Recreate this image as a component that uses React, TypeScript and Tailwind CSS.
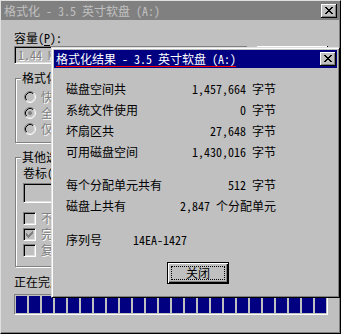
import React from 'react';

// Win98 style "format" window with the result dialog on top

const X_GLYPH = ['XX....XX', '.XX..XX.', '..XXXX..', '...XX...', '..XXXX..', '.XX..XX.', 'XX....XX'];
const CHECK_GLYPH = ['......X', '.....XX', 'X...XXX', 'XX.XXX.', 'XXXXX..', '.XXX...', '..X....'];

function Bitmap({ rows, color }: { rows: string[]; color: string }) {
  const w = rows[0].length;
  return (
    <svg width={w} height={rows.length} viewBox={`0 0 ${w} ${rows.length}`} shapeRendering="crispEdges" className="block">
      {rows.flatMap((r, y) =>
        r.split('').map((c, x) =>
          c === 'X' ? <rect key={`${x}-${y}`} x={x} y={y} width={1} height={1} fill={color} /> : null
        )
      )}
    </svg>
  );
}

function CloseBox() {
  return (
    <div className="flex h-[14px] w-[16px] shrink-0 items-start bg-[#c0c0c0] pl-[4px] pt-[3px] shadow-[inset_-1px_-1px_0_#000,inset_1px_1px_0_#fff,inset_-2px_-2px_0_#808080]">
      <Bitmap rows={X_GLYPH} color="#000" />
    </div>
  );
}

function Radio({ checked }: { checked?: boolean }) {
  return (
    <svg width="12" height="12" viewBox="0 0 12 12" className="block shrink-0">
      <circle cx="6" cy="6" r="5" fill="#c0c0c0" />
      <path d="M2.11 9.89 A5.5 5.5 0 0 1 9.89 2.11" fill="none" stroke="#808080" />
      <path d="M9.89 2.11 A5.5 5.5 0 0 1 2.11 9.89" fill="none" stroke="#fff" />
      <path d="M2.82 9.18 A4.5 4.5 0 0 1 9.18 2.82" fill="none" stroke="#000" />
      <path d="M9.18 2.82 A4.5 4.5 0 0 1 2.82 9.18" fill="none" stroke="#dfdfdf" />
      {checked && <circle cx="6" cy="6" r="2" fill="#808080" />}
    </svg>
  );
}

function Checkbox({ checked }: { checked?: boolean }) {
  return (
    <div className="flex h-[13px] w-[13px] shrink-0 items-start border border-t-[#808080] border-l-[#808080] border-r-white border-b-white bg-[#c0c0c0] pl-[2px] pt-[2px] shadow-[inset_1px_1px_0_#000,inset_-1px_-1px_0_#dfdfdf]">
      {checked && <Bitmap rows={CHECK_GLYPH} color="#808080" />}
    </div>
  );
}

function Group({ title, className, children }: { title: string; className: string; children: React.ReactNode }) {
  return (
    <div className={`relative ml-[1px] w-[312px] border border-[#808080] shadow-[inset_1px_1px_0_#fff,1px_1px_0_#fff] ${className}`}>
      <span className="absolute -top-[8px] left-[5px] bg-[#c0c0c0] px-[1px] whitespace-nowrap">{title}</span>
      {children}
    </div>
  );
}

const sunken =
  'border border-t-[#808080] border-l-[#808080] border-r-white border-b-white shadow-[inset_1px_1px_0_#000,inset_-1px_-1px_0_#dfdfdf]';
const disabledText = 'text-[#808080] [text-shadow:1px_1px_0_#fff] whitespace-nowrap';

const sizes = [
  ['磁盘空间共', '1,457,664 字节'],
  ['系统文件使用', '0 字节'],
  ['坏扇区共', '27,648 字节'],
  ['可用磁盘空间', '1,430,016 字节'],
];

const units = [
  ['每个分配单元共有', '512 字节'],
  ['磁盘上共有', '2,847 个分配单元'],
];

function Row({ label, value }: { label: string; value: string }) {
  return (
    <div className="flex h-[21px] items-center">
      <span className="w-[67px] shrink-0 whitespace-nowrap">{label}</span>
      <span className="w-[143px] shrink-0 whitespace-nowrap text-right">{value}</span>
    </div>
  );
}

export default function App() {
  return (
    <div className="relative h-[334px] w-[341px] overflow-hidden border border-t-[#dfdfdf] border-l-[#dfdfdf] border-r-black border-b-black bg-[#c0c0c0] font-['Noto_Sans_CJK_SC',sans-serif] text-[12px] leading-[14px] text-black shadow-[inset_-1px_-1px_0_#808080] [font-feature-settings:'hwid']">
      {/* Window title */}
      <div className="mr-[1px] flex h-[19px] items-center justify-between bg-[#808080] pl-[3px] pr-[2px] text-[#c0c0c0]">
        <span className="whitespace-nowrap">格式化 - 3.5 英寸软盘 (A:)</span>
        <CloseBox />
      </div>

      <div className="pl-[13px]">
        <div className="mt-[11px] whitespace-nowrap">
          容量(<span className="underline underline-offset-2">P</span>):
        </div>
        <div className="mt-[1px] flex gap-[9px]">
          <div className={`flex h-[18px] w-[234px] items-center pl-[3px] ${sunken}`}>
            <span className={disabledText}>1.44 MB (3.5 英寸)</span>
          </div>
          <div className="h-[18px] w-[71px] bg-[#c0c0c0] shadow-[inset_-1px_-1px_0_#000,inset_1px_1px_0_#fff,inset_-2px_-2px_0_#808080]" />
        </div>

        <Group title="格式化类型" className="mt-[14px] h-[65px] pl-[8px] pt-[10px]">
          <div className="flex h-[16px] items-center gap-[5px]">
            <Radio />
            <span className={disabledText}>快速(擦除)(Q)</span>
          </div>
          <div className="flex h-[16px] items-center gap-[5px]">
            <Radio checked />
            <span className={disabledText}>全面(F)</span>
          </div>
          <div className="flex h-[16px] items-center gap-[5px]">
            <Radio />
            <span className={disabledText}>仅复制系统文件(O)</span>
          </div>
        </Group>

        <Group title="其他选项" className="mt-[14px] h-[110px] pl-[7px] pt-[8px]">
          <div className="whitespace-nowrap">
            卷标(<span className="underline underline-offset-2">L</span>):
          </div>
          <div className={`mt-[3px] h-[20px] w-[200px] ${sunken}`} />
          <div className="mt-[7px] flex h-[16px] items-center gap-[5px]">
            <Checkbox />
            <span className={disabledText}>不要卷标(N)</span>
          </div>
          <div className="flex h-[16px] items-center gap-[5px]">
            <Checkbox checked />
            <span className={disabledText}>完成后显示摘要(D)</span>
          </div>
          <div className="flex h-[16px] items-center gap-[5px]">
            <Checkbox />
            <span className={disabledText}>复制系统文件(Y)</span>
          </div>
        </Group>

        <div className="mt-[8px] whitespace-nowrap">正在完成格式化...</div>
        <div className="mt-[5px] flex h-[21px] w-[314px] gap-[2px] border border-t-[#808080] border-l-[#808080] border-r-white border-b-white p-[1px]">
          {Array.from({ length: 24 }).map((_, i) => (
            <div key={i} className="h-full w-[11px] bg-[#000080]" />
          ))}
        </div>
      </div>

      {/* Result dialog */}
      <div className="absolute left-[50px] top-[46px] flex h-[251px] w-[289px] flex-col border border-t-[#dfdfdf] border-l-[#dfdfdf] border-r-black border-b-black bg-[#c0c0c0] p-[2px] shadow-[inset_1px_1px_0_#fff,inset_-1px_-1px_0_#808080]">
        <div className="flex h-[18px] items-start justify-between bg-[#000080] pl-[2px] pr-[1px] pt-[2px] text-white">
          <span className="whitespace-nowrap border-b border-[#ff0000]">格式化结果 - 3.5 英寸软盘 (A:)</span>
          <CloseBox />
        </div>

        <div className="pl-[12px] pt-[10px]">
          {sizes.map(([l, v]) => (
            <Row key={l} label={l} value={v} />
          ))}
          <div className="mt-[12px]">
            {units.map(([l, v]) => (
              <Row key={l} label={l} value={v} />
            ))}
          </div>
          <div className="mt-[13px] flex h-[21px] items-center">
            <span className="w-[67px] shrink-0">序列号</span>
            <span>14EA-1427</span>
          </div>
        </div>

        <div className="ml-[113px] mt-[12px] flex h-[22px] w-[62px] border border-black bg-[#c0c0c0] shadow-[inset_1px_1px_0_#fff,inset_-1px_-1px_0_#000,inset_-2px_-2px_0_#808080]">
          <div className="m-[3px] flex flex-1 items-center justify-center border border-dotted border-black">关闭</div>
        </div>
      </div>
    </div>
  );
}
